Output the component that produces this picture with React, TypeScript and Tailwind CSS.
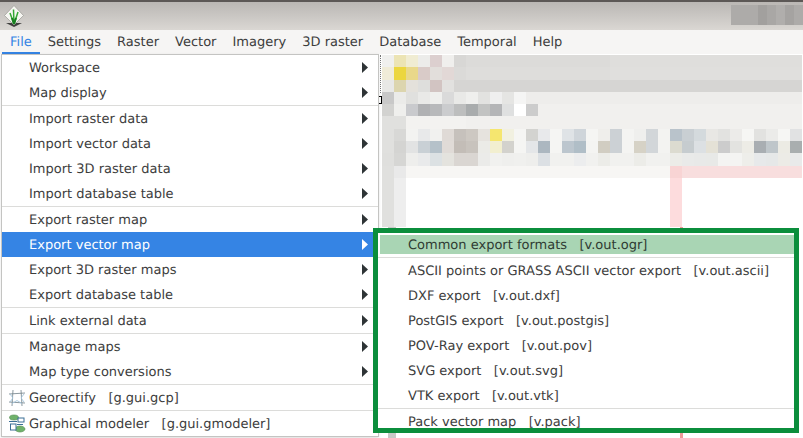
const mainGroups = [
  ["Workspace", "Map display"],
  ["Import raster data", "Import vector data", "Import 3D raster data", "Import database table"],
  ["Export raster map", "Export vector map", "Export 3D raster maps", "Export database table"],
  ["Link external data"],
  ["Manage maps", "Map type conversions"],
];

const menuBar = ["File", "Settings", "Raster", "Vector", "Imagery", "3D raster", "Database", "Temporal", "Help"];

const fill = (color: string, count: number) => Array<string>(count).fill(color);

// blurred window content behind the menu, 12px cells
const mosaic = [
  ["#f0f0ee", "#ece4b4", "#f0ecd2", "#ececea", "#dccfcf", "#f0efed", "#d8d7d5", ...fill("#dcdbd9", 12), ...fill("#dfdedc", 16)],
  ["#f0ecd8", "#ecd63e", "#e9d88a", "#d9cbc8", "#e2dedb", "#e2d8d6", "#dbdad8", ...fill("#dedddb", 12), ...fill("#e0dfdd", 16)],
  ["#e8e8e6", "#dcd5ae", "#e4e1db", "#dededc", "#d2c4c2", "#e2e1df", ...fill("#d6d5d3", 29)],
  ["#c8c8c8", "#ebebe9", "#e0e0de", "#e9e9e7", "#efefed", "#dadada", "#e9e9e7", "#efefed", "#e2e2e0", "#efefef", "#e5e5e3", "#f5f5f4", ...fill("#eeedeb", 23)],
  ["#d2d2d0", "#efefed", "#c9cacd", "#b0b1b3", "#b8b9bb", "#cbccce", "#bdbebe", "#a9acad", "#c2c3c2", "#b4b5b7", "#dfe0e0", "#ffffff", "#cccccc", ...fill("#f1f0ee", 22)],
  ["#e0e0de", "#e0e0de", ...fill("#f3f2f0", 5), ...fill("#f1f0ee", 28)],
  ["#e0e0de", "#d8d8d6", "#f3f3f1", "#e8e9ea", "#f1f1ef", "#dfdad6", "#c6c1bc", "#cdc8c2", "#e6e3de", "#f5e66f", "#f1f0e0", "#f5f5f3", "#d3d3d0", "#e8e9eb", "#f5f5f3", "#dfe3e6", "#cfd5da", "#f5f5f3", "#efeeeb", "#ccd1d5", "#f4f4f2", "#efefed", "#d2d6d9", "#f3f3f1", "#b9c3cb", "#c9cfd3", "#d4dadd", "#e8e7e4", "#e2e2e0", "#ecebe9", "#f6f6f4", "#e2e2e0", "#ebebe9", "#f6f6f4", "#e1e2e3"],
  ["#e0e0de", "#d4d4d2", "#e2e3e3", "#c9d0d5", "#b5c1c9", "#e0dbd7", "#c3bdb7", "#c8c3bd", "#ebebe7", "#f2efd0", "#d3d2cd", "#f5f5f3", "#e4e6e8", "#acb7c0", "#f5f5f3", "#bcc6ce", "#b0bec7", "#f4f4f2", "#d1cdc2", "#ccd1d5", "#f4f4f2", "#d6d2c6", "#d2d6d9", "#f3f3f1", "#dcdbd0", "#c6cccf", "#dce0e3", "#e4e1d6", "#cccccc", "#e3e3e0", "#edece6", "#a9aeb2", "#bfc6ca", "#ecebe4", "#a9aeaf"],
  ["#dfdfdd", "#d6d6d4", "#eeeeec", "#e9eaeb", "#dce1e3", "#e4e3de", "#dad6d2", "#dad6d2", "#ebebe9", "#f1f1ef", "#efefed", "#f0f0ee", "#eeeeec", "#dce0e4", "#f1f1ef", "#f1f1ef", "#ecedee", "#f1f1ef", "#ecece8", "#f1f1ef", "#f1f1ef", "#ecece8", "#f1f1ef", "#f1f1ef", "#ecece8", "#e9eae9", "#e8e9e8", "#e8e9e7", "#f4f4f2", "#f4f4f2", "#eeeeea", "#e7e9ea", "#e6e8e8", "#ecebe6", "#e9eaea"],
  ["#e0e0de", "#e9e9e9", ...fill("#f7f6f4", 22), "#f8d4d4", ...fill("#f8dede", 10)],
];

const blurredTitle = ["#adaba9", "#adaba9", "#adaba9", "#a2a09e", "#a9a7a5", "#b0aeac", "#a5a3a1", "#adaba9"];

const exportItems = [
  "ASCII points or GRASS ASCII vector export   [v.out.ascii]",
  "DXF export   [v.out.dxf]",
  "PostGIS export   [v.out.postgis]",
  "POV-Ray export   [v.out.pov]",
  "SVG export   [v.out.svg]",
  "VTK export   [v.out.vtk]",
];

const Arrow = ({ active }: { active?: boolean }) => (
  <svg width="6" height="11" viewBox="0 0 6 11" className={active ? "fill-white" : "fill-[#2e3436]"}>
    <path d="M0 0 L6 5.5 L0 11 Z" />
  </svg>
);

const GrassLogo = () => (
  <svg width="20" height="22" viewBox="0 0 20 22">
    <path d="M2 18 L18 18 L10 22 Z" fill="#3e3e3c" />
    <path d="M10 0.5 L19.5 10.5 L10 20 L0.5 10.5 Z" fill="#f6f6f2" stroke="#9a9a94" strokeWidth="0.7" />
    <path d="M10 19 L6 8 M10 19 L9.5 4.5 M10 19 L14 7" stroke="#35a835" strokeWidth="1.5" fill="none" />
    <path d="M10 19 L8 13 M10 19 L12 13" stroke="#17801f" strokeWidth="2" fill="none" />
  </svg>
);

const GeorectifyIcon = () => (
  <svg width="18" height="18" viewBox="0 0 18 18" fill="none">
    <path d="M5 1 L4 17 M13 1 L14 17" stroke="#6f7f88" strokeWidth="0.8" />
    <path d="M1 5 L17 4 M1 13 L17 14" stroke="#6f7f88" strokeWidth="0.8" />
    <path d="M2 5 L5 9 L2 13 M16 5 L13 9 L16 13" stroke="#a5c6de" strokeWidth="0.9" />
    <path d="M4 14.5 L9 11.5 L14 14.5" stroke="#a5c6de" strokeWidth="0.9" />
  </svg>
);

const ModelerIcon = () => (
  <svg width="18" height="19" viewBox="0 0 18 19" fill="none">
    <ellipse cx="6" cy="3.5" rx="4.5" ry="2.5" fill="#6fb26a" stroke="#4f8a4c" strokeWidth="0.6" />
    <ellipse cx="12" cy="15" rx="5" ry="3" fill="#6fb26a" stroke="#4f8a4c" strokeWidth="0.6" />
    <rect x="10" y="4" width="6" height="4" fill="#ffffff" stroke="#3a6f96" strokeWidth="1" />
    <rect x="2.5" y="10" width="5.5" height="6" fill="#ffffff" stroke="#3a6f96" strokeWidth="1" />
    <path d="M1 7.5 L9 7.5 M9 10.5 L15 10.5" stroke="#3a6f96" strokeWidth="1" />
  </svg>
);

const MenuRow = ({ label, active, icon }: { label: string; active?: boolean; icon?: React.ReactNode }) => (
  <div className={`flex h-[25px] items-center pr-[10px] ${active ? "bg-[#3584e4] text-white" : ""}`}>
    <div className="flex w-[27px] shrink-0 justify-end pr-[3px]">{icon}</div>
    <span className="flex-1 whitespace-pre pt-[2px]">{label}</span>
    {icon ? null : <Arrow active={active} />}
  </div>
);

const Divider = () => <div className="h-px bg-[#dcdcda]" />;

export default function App() {
  return (
    <div className="flex h-[438px] w-[803px] flex-col overflow-hidden bg-white font-['DejaVu_Sans',sans-serif] text-[13px] text-[#3d3d3d] [text-rendering:geometricPrecision]">
      {/* Title bar */}
      <div className="flex h-[30px] shrink-0 items-center justify-between border-t-2 border-[#5c5856] bg-gradient-to-b from-[#bab7b4] to-[#dad7d3] pl-[4px]">
        <GrassLogo />
        <div className="mb-[2px] flex h-[20px]">
          {blurredTitle.map((color, i) => (
            <div key={i} className="w-[9px]" style={{ backgroundColor: color }} />
          ))}
        </div>
      </div>

      {/* Menu bar */}
      <div className="flex h-[24px] shrink-0 items-stretch bg-[#f6f5f4] pl-[2px]">
        {menuBar.map((name, i) => (
          <div
            key={name}
            className={`flex items-center px-2 ${i === 0 ? "border-b-[2px] border-[#3584e4] pt-[4px] text-[#3584e4]" : "pt-[2px]"}`}
          >
            {name}
          </div>
        ))}
      </div>

      {/* Window content, blurred in the screenshot */}
      <div className="relative flex flex-1 flex-col pl-[382px] pt-px">
        {mosaic.map((row, r) => (
          <div key={r} className="flex h-[12.3px] shrink-0">
            {row.map((color, c) => (
              <div key={c} className="w-[12px] shrink-0" style={{ backgroundColor: color }} />
            ))}
          </div>
        ))}
        <div className="flex h-[49px] shrink-0">
          <div className="w-[12px] bg-[#e0e0de]" />
          <div className="w-[12px] bg-[#eeeeee]" />
          <div className="ml-[264px] w-[12px] bg-[#fddcdd]" />
        </div>
        <div className="flex flex-1">
          <div className="ml-[6px] w-[8px] bg-[#c9c9c7]" />
          <div className="ml-[284px] w-[3px] bg-[#ef9a9a]" />
        </div>

        {/* resize handles peeking out from behind the menu */}
        <div className="absolute left-[380px] top-px h-[38px] border-l border-dotted border-[#777777]" />
        <div className="absolute left-[378px] top-[42px] h-[8px] w-[4px] border border-black" />

        {/* File menu */}
        <div className="absolute left-px top-0 w-[378px] border border-[#c4c4c2] bg-white shadow-sm">
          {mainGroups.map((group, g) => (
            <div key={g}>
              {group.map((label) => (
                <MenuRow key={label} label={label} active={label === "Export vector map"} />
              ))}
              <Divider />
            </div>
          ))}
          <MenuRow label="Georectify   [g.gui.gcp]" icon={<GeorectifyIcon />} />
          <Divider />
          <MenuRow label="Graphical modeler   [g.gui.gmodeler]" icon={<ModelerIcon />} />
        </div>

        {/* Export vector map submenu, with the green annotation frame */}
        <div className="absolute left-[373px] top-[174px] h-[205px] w-[426px] overflow-hidden border-[5px] border-[#0b8e3c] bg-white">
          <div className="ml-[2px] mt-[2px] flex h-[19px] items-center bg-[#a9d5b4] pl-[28px] pt-[2px] whitespace-pre text-[#2f3b33]">
            Common export formats   [v.out.ogr]
          </div>
          <div className="mt-[3px] h-px bg-[#dcdcda]" />
          <div className="flex flex-col">
            {exportItems.map((label) => (
              <div key={label} className="flex h-[25px] items-center pl-[30px] pt-[2px] whitespace-pre">
                {label}
              </div>
            ))}
          </div>
          <Divider />
          <div className="flex h-[25px] items-center pl-[30px] pt-[2px] whitespace-pre">Pack vector map   [v.pack]</div>
        </div>
      </div>
    </div>
  );
}
